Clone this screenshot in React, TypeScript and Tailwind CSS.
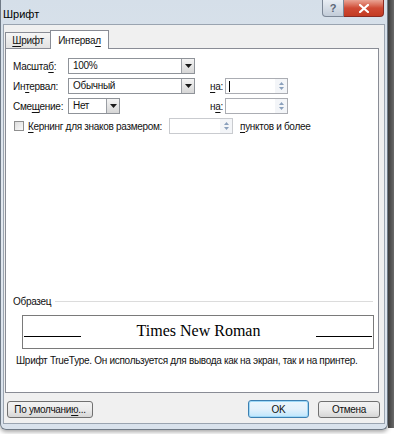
import type { ReactNode } from 'react'

// Windows 7 "Шрифт" dialog, Интервал tab

const U = ({ children }: { children: ReactNode }) => (
  <span className="underline underline-offset-[2px] decoration-[1px]">{children}</span>
)

const DropArrow = () => (
  <svg width="7" height="4" viewBox="0 0 7 4">
    <path d="M0 0h7L3.5 4z" fill="#1a1a1a" />
  </svg>
)

const Combo = ({ value, width }: { value: string; width: string }) => (
  <div className={`${width} h-[16px] flex border border-[#8f9399] bg-white`}>
    <div className="flex-1 pl-[4px] leading-[14px] text-[#111]">{value}</div>
    <div className="w-[13px] flex items-center justify-center border-l border-[#9a9ea4] bg-gradient-to-b from-[#f4f4f4] to-[#d6d6d6]">
      <DropArrow />
    </div>
  </div>
)

const Spin = ({ width, cursor, faded }: { width: string; cursor?: boolean; faded?: boolean }) => (
  <div className={`${width} h-[16px] flex border ${faded ? 'border-[#c9cbcf]' : 'border-[#abadb3]'} bg-white`}>
    <div className="flex-1 pl-[3px] flex items-center">
      {cursor && <div className="w-[1px] h-[11px] bg-black" />}
    </div>
    <div className="w-[12px] flex flex-col items-center justify-center gap-[2px] bg-[#f3f5f8]">
      <svg width="5" height="3" viewBox="0 0 5 3"><path d="M2.5 0L5 3H0z" fill="#8aa0bc" /></svg>
      <svg width="5" height="3" viewBox="0 0 5 3"><path d="M0 0h5L2.5 3z" fill="#8aa0bc" /></svg>
    </div>
  </div>
)

export default function App() {
  return (
    <div className="w-[394px] h-[434px] bg-white flex items-start overflow-hidden whitespace-nowrap font-['Liberation_Sans',sans-serif] text-[10px] tracking-[-0.3px] text-[#111]">
      {/* window */}
      <div className="w-[388px] h-[430px] flex flex-col rounded-b-[6px] border border-t-0 border-[#6f7a86] bg-gradient-to-b from-[#d5dfe9] via-[#e3e9f0] to-[#d9e2ec] shadow-[0_2px_4px_rgba(0,0,0,0.35)]">
        {/* title bar */}
        <div className="h-[24px] flex items-start justify-between">
          <div className="pl-[2px] pt-[6px] text-[11px] tracking-normal text-black">Шрифт</div>
          <div className="flex mr-[3px]">
            <div className="w-[22px] h-[17px] flex items-center justify-center rounded-bl-[4px] border border-t-0 border-[#7c8796] bg-gradient-to-b from-[#e9eef4] to-[#c2ccd8] text-[11px] font-bold text-[#5b6778]">
              ?
            </div>
            <div className="w-[40px] h-[17px] flex items-center justify-center rounded-br-[4px] border border-t-0 border-l-0 border-[#8a2a22] bg-gradient-to-b from-[#e9a394] via-[#cf4a35] to-[#c33b22]">
              <svg width="10" height="9" viewBox="0 0 10 9">
                <path d="M1 1l8 7M9 1L1 8" stroke="#fff" strokeWidth="2.2" strokeLinecap="square" />
              </svg>
            </div>
          </div>
        </div>

        {/* client area */}
        <div className="flex-1 mx-[2px] mb-[5px] flex flex-col bg-[#f0f0f0] border border-[#9aa4b0]">
          {/* tabs */}
          <div className="h-[23px] flex items-end pl-[1px] pt-[4px]">
            <div className="h-[16px] w-[46px] flex items-center justify-center border border-b-0 border-[#898c95] bg-gradient-to-b from-[#f6f6f6] to-[#e2e2e2]">
              <span><U>Ш</U>рифт</span>
            </div>
            <div className="h-[19px] w-[59px] -ml-[1px] -mb-[1px] z-10 flex items-center justify-center border border-b-0 border-[#898c95] bg-white">
              <span>Интерва<U>л</U></span>
            </div>
          </div>

          {/* tab panel */}
          <div className="ml-[1px] w-[374px] h-[345px] flex flex-col border border-[#898c95] bg-white pl-[7px] pt-[9px]">
            <div className="flex flex-col gap-[4px]">
              <div className="h-[16px] flex items-center">
                <div className="w-[55px]">Масшта<U>б</U>:</div>
                <Combo value="100%" width="w-[127px]" />
              </div>
              <div className="h-[16px] flex items-center">
                <div className="w-[55px]">Ин<U>т</U>ервал:</div>
                <Combo value="Обычный" width="w-[127px]" />
                <div className="w-[30px] pl-[15px]"><U>н</U>а:</div>
                <Spin width="w-[63px]" cursor />
              </div>
              <div className="h-[16px] flex items-center">
                <div className="w-[55px]">Сме<U>щ</U>ение:</div>
                <Combo value="Нет" width="w-[52px]" />
                <div className="w-[105px] pl-[90px]">н<U>а</U>:</div>
                <Spin width="w-[63px]" />
              </div>
              <div className="h-[16px] flex items-center">
                <div className="ml-[1px] w-[10px] h-[10px] border border-[#8f8f8f] bg-gradient-to-br from-[#dcdcdc] to-[#fbfbfb]" />
                <div className="w-[145px] pl-[4px]"><U>К</U>ернинг для знаков размером:</div>
                <Spin width="w-[64px]" faded />
                <div className="pl-[7px]"><U>п</U>унктов и более</div>
              </div>
            </div>

            {/* sample */}
            <div className="mt-[160px] flex items-center gap-[4px] pr-[5px]">
              <span>Образец</span>
              <div className="flex-1 h-[1px] bg-[#dcdcdc]" />
            </div>
            <div className="mt-[6px] ml-[9px] w-[352px] h-[34px] flex items-end justify-between border border-[#7a7a7a] px-[1px] pb-[11px]">
              <div className="w-[57px] h-[1px] bg-black" />
              <div className="font-['Liberation_Serif',serif] text-[16px] leading-[16px] tracking-normal text-black mb-[-2px]">Times New Roman</div>
              <div className="w-[56px] h-[1px] bg-black" />
            </div>
            <div className="mt-[4px] ml-[3px]">Шрифт TrueType. Он используется для вывода как на экран, так и на принтер.</div>
          </div>

          {/* buttons */}
          <div className="flex items-start pt-[8px] pl-[3px]">
            <div className="w-[86px] h-[17px] flex items-center justify-center rounded-[3px] border border-[#707070] bg-gradient-to-b from-[#f2f2f2] via-[#ebebeb] to-[#d6d6d6]">
              <span>По умолчани<U>ю</U>...</span>
            </div>
            <div className="ml-[155px] w-[61px] h-[18px] -mt-[1px] flex items-center justify-center rounded-[3px] border border-[#3c7fb1] bg-gradient-to-b from-[#eaf6fd] via-[#e4f1fb] to-[#bee6fd] shadow-[inset_0_0_0_1px_#9ed8f7]">
              OK
            </div>
            <div className="ml-[9px] w-[62px] h-[17px] flex items-center justify-center rounded-[3px] border border-[#707070] bg-gradient-to-b from-[#f2f2f2] via-[#ebebeb] to-[#d6d6d6]">
              Отмена
            </div>
          </div>
        </div>
      </div>
      {/* desktop edge */}
      <div className="w-[6px] h-[428px] bg-gradient-to-r from-[#3d3d3d] to-[#6a6a6a]" />
    </div>
  )
}
